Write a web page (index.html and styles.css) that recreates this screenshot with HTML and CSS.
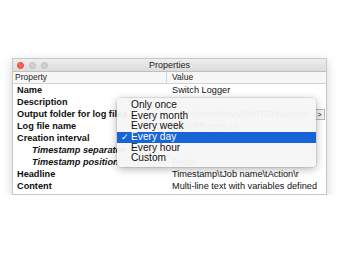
FILE: index.html
```html
<!DOCTYPE html>
<html lang="en">
<head>
  <meta charset="UTF-8">
  <title>Properties</title>
  <link rel="stylesheet" href="styles.css">
</head>
<body>

<div class="window">
  <div class="titlebar">
    <div class="lights">
      <span class="light red"></span>
      <span class="light"></span>
      <span class="light"></span>
    </div>
    <div class="title">Properties</div>
  </div>

  <div class="table">
    <div class="row head">
      <div class="cell key">Property</div>
      <div class="cell val">Value</div>
    </div>
    <div class="row">
      <div class="cell key">Name</div>
      <div class="cell val">Switch Logger</div>
    </div>
    <div class="row">
      <div class="cell key">Description</div>
      <div class="cell val"></div>
    </div>
    <div class="row">
      <div class="cell key">Output folder for log files</div>
      <div class="cell val"><span class="path faint">~/Workflows/SWITCH/Logger</span><span class="more">&gt;</span></div>
    </div>
    <div class="row">
      <div class="cell key">Log file name</div>
      <div class="cell val"><span class="faint">SwitchReport.txt</span></div>
    </div>
    <div class="row">
      <div class="cell key">Creation interval</div>
      <div class="cell val"></div>
    </div>
    <div class="row sub">
      <div class="cell key">Timestamp separator</div>
      <div class="cell val"></div>
    </div>
    <div class="row sub">
      <div class="cell key">Timestamp position</div>
      <div class="cell val"><span class="faint">Prefix</span></div>
    </div>
    <div class="row">
      <div class="cell key">Headline</div>
      <div class="cell val">Timestamp\tJob name\tAction\r</div>
    </div>
    <div class="row">
      <div class="cell key">Content</div>
      <div class="cell val">Multi-line text with variables defined</div>
    </div>
  </div>

  <ul class="menu">
    <li>Only once</li>
    <li>Every month</li>
    <li>Every week</li>
    <li class="selected"><span class="check">&#10003;</span>Every day</li>
    <li>Every hour</li>
    <li>Custom</li>
  </ul>
</div>

</body>
</html>
```

FILE: styles.css
```css
body {
  margin: 0;
  padding: 58px 0 0 12px;
  background: #fff;
  font-family: "Liberation Sans", Arial, sans-serif;
  color: #111;
}

.window {
  position: relative;
  width: 315px;
  height: 137px;
  background: #fff;
  border: 1px solid #c8c8c8;
  box-sizing: border-box;
  box-shadow: 0 3px 10px rgba(0,0,0,0.18);
}

.titlebar {
  height: 12px;
  display: flex;
  align-items: center;
  background: linear-gradient(#eeeeee, #dcdcdc);
  border-bottom: 1px solid #c0c0c0;
  position: relative;
}

.lights {
  display: flex;
  gap: 5px;
  padding-left: 4px;
}

.light {
  width: 7px;
  height: 7px;
  border-radius: 50%;
  background: #d0d0d0;
  border: 0.5px solid #c0c0c0;
  box-sizing: border-box;
}

.light.red {
  background: #fc5f57;
  border-color: #e2463f;
}

.title {
  position: absolute;
  left: 0;
  right: 0;
  text-align: center;
  font-size: 9px;
  color: #222;
}

.row {
  display: grid;
  grid-template-columns: 154px 1fr;
  height: 12px;
  align-items: center;
}

.cell {
  white-space: nowrap;
  overflow: hidden;
  font-size: 9.2px;
  line-height: 12px;
}

.key {
  padding-left: 4px;
  font-weight: bold;
}

.val {
  padding-left: 5px;
  display: flex;
  align-items: center;
}

.faint {
  color: #444;
}

.row.head {
  height: 11px;
  background: #f7f7f7;
  border-bottom: 1px solid #d2d2d2;
}

.row.head .cell {
  font-weight: normal;
  font-size: 8.5px;
  line-height: 11px;
  color: #222;
}

.row.head .key {
  padding-left: 2px;
  border-right: 1px solid #d6d6d6;
}

.row.sub .key {
  padding-left: 19px;
  font-style: italic;
}

.path {
  flex: 1;
  text-align: right;
  padding-right: 5px;
}

.more {
  width: 9px;
  height: 9px;
  margin-right: 1px;
  border: 1px solid #b8b8b8;
  background: #f2f2f2;
  font-size: 7px;
  line-height: 9px;
  text-align: center;
}

.menu {
  position: absolute;
  left: 104px;
  top: 39px;
  width: 199px;
  margin: 0;
  padding: 2px 0 3px;
  list-style: none;
  background: rgba(246,246,246,0.95);
  border-radius: 4px;
  box-shadow: 0 2px 8px rgba(0,0,0,0.3), 0 0 0 0.5px rgba(0,0,0,0.15);
}

.menu li {
  position: relative;
  height: 10.7px;
  line-height: 10.7px;
  padding-left: 14px;
  font-size: 10.2px;
  color: #111;
}

.menu li.selected {
  background: #1764d8;
  color: #fff;
}

.check {
  position: absolute;
  left: 4px;
  font-size: 9px;
}
```
